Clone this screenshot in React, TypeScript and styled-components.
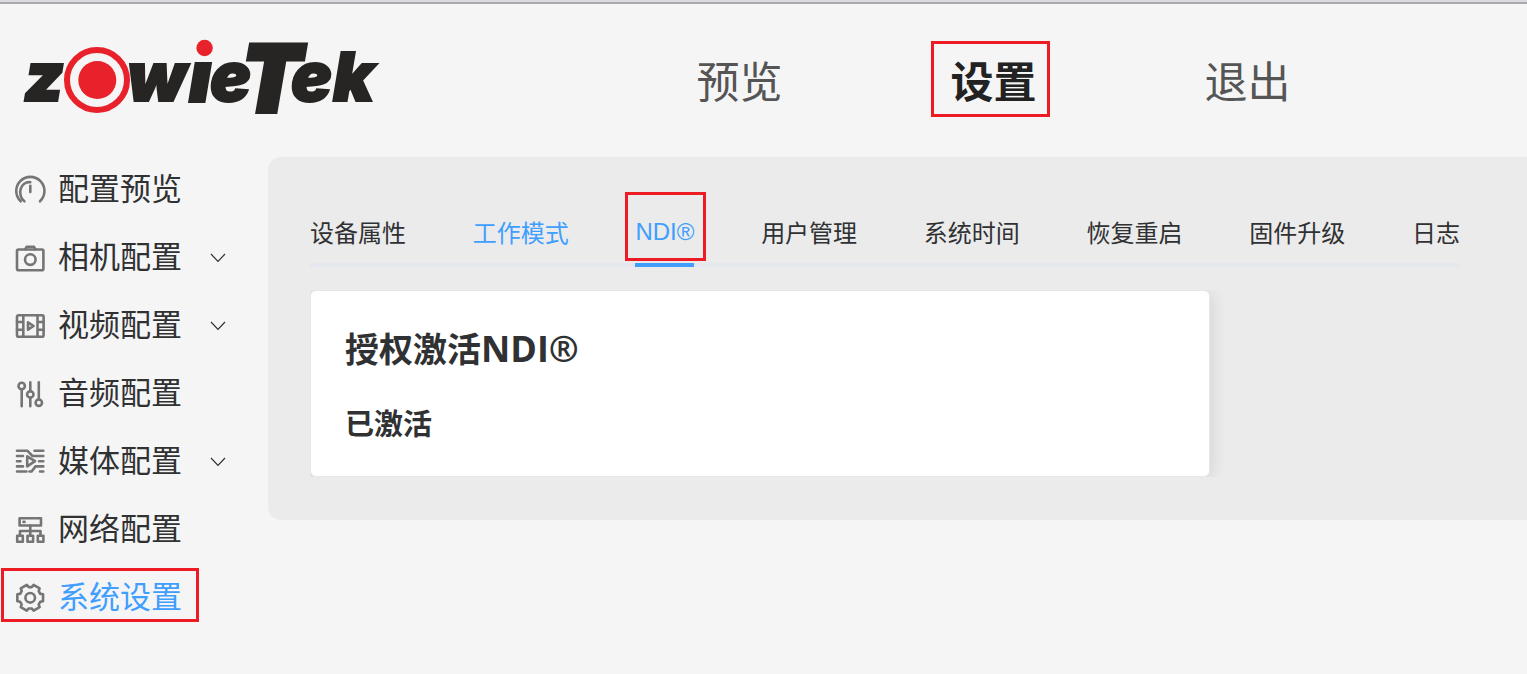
import React from "react";
import styled, { createGlobalStyle, css } from "styled-components";

const sans = `"Liberation Sans", "Noto Sans CJK SC", sans-serif`;
const red = "#ed1c24";
const blue = "#409eff";

const GlobalStyle = createGlobalStyle`
  *, *::before, *::after { box-sizing: border-box; }
  body { margin: 0; background: #f5f5f5; color: #303133; font-family: ${sans}; }
  button { margin: 0; background: none; font-family: inherit; color: inherit; cursor: pointer; }
  h1, h2, p, ul { margin: 0; padding: 0; }
`;

const Page = styled.div`
  min-height: 100vh;
  border-top: 2px solid #dadae2;
`;

const Header = styled.header`
  display: flex;
  align-items: flex-start;
  height: 155px;
  padding: 0 156px 0 16px;
  border-top: 2px solid #a9a9ad;
`;

const Logo = styled.svg`
  flex: none;
  width: 376px;
  height: 120px;
  overflow: visible;
  font-family: Inter, Roboto, sans-serif;
  font-size: 68px;
  font-weight: 900;
  font-style: italic;
`;

const MainNav = styled.nav`
  flex: 1;
  display: grid;
  grid-template-columns: repeat(3, 1fr);
  justify-items: center;
  margin: 37px 0 0 217px;
`;

const MainButton = styled.button<{ $active?: boolean }>`
  height: 76px;
  padding: 8px 10px 0 17px;
  border: 3px solid ${(p) => (p.$active ? red : "transparent")};
  color: ${(p) => (p.$active ? "#222" : "#555")};
  font-size: 43px;
  font-weight: ${(p) => (p.$active ? 700 : 400)};
  line-height: 62px;
  white-space: nowrap;
`;

const Body = styled.div`
  display: flex;
  align-items: flex-start;
`;

const Sidebar = styled.nav`
  flex: none;
  width: 268px;
  padding: 3px 0 0 1px;
`;

const MenuList = styled.ul`
  display: flex;
  flex-direction: column;
  align-items: flex-start;
  gap: 14px;
  list-style: none;
`;

const MenuButton = styled.button<{ $active?: boolean }>`
  display: flex;
  align-items: center;
  height: 54px;
  padding: 6px 14px 0 10px;
  border: 3px solid ${(p) => (p.$active ? red : "transparent")};
  color: ${(p) => (p.$active ? blue : "#303133")};
  font-size: 31px;
  line-height: 42px;
  white-space: nowrap;
`;

const MenuLabel = styled.span`
  margin-left: 12px;
`;

const Icon = styled.svg`
  flex: none;
  width: 32px;
  height: 32px;
  fill: none;
  stroke: #757575;
  stroke-width: 2.6;
  stroke-linecap: round;
  stroke-linejoin: round;
`;

const Chevron = styled.svg`
  flex: none;
  width: 16px;
  height: 10px;
  margin-left: 28px;
  fill: none;
  stroke: #303133;
  stroke-width: 1.2;
`;

const Panel = styled.main`
  flex: 1;
  min-width: 0;
  padding: 48px 67px 43px 42px;
  border-radius: 13px 0 0 13px;
  background: #ebebeb;
`;

const Tabs = styled.div`
  display: flex;
  justify-content: space-between;
  border-bottom: 4px solid #e4e7ed;
`;

const Tab = styled.button<{ $blue?: boolean; $active?: boolean }>`
  position: relative;
  height: 62px;
  margin-bottom: -4px;
  padding: 0 0 4px;
  border: 0;
  color: ${(p) => (p.$blue || p.$active ? blue : "#303133")};
  font-size: 24px;
  line-height: 58px;
  white-space: nowrap;
  ${(p) =>
    p.$active &&
    css`
      border-bottom: 4px solid ${blue};
      padding-bottom: 4px;
      line-height: 54px;
      &::after {
        content: "";
        position: absolute;
        inset: -13px -12px 2px -10px;
        border: 3px solid ${red};
      }
    `}
`;

const CardArea = styled.div`
  margin-top: 23px;
  overflow: hidden;
`;

const Card = styled.section`
  max-width: 900px;
  padding: 34px;
  padding-bottom: 31px;
  border: 1px solid #e4e7ed;
  border-radius: 6px;
  background: #fff;
  box-shadow: 0 2px 18px rgba(0, 0, 0, 0.12);
`;

const CardTitle = styled.h1`
  font-family: "Open Sans", "Noto Sans CJK SC", sans-serif;
  font-size: 34px;
  line-height: 48px;
`;

const Latin = styled.span`
  font-size: 36px;
  line-height: 1;
`;

const CardStatus = styled.h2`
  margin-top: 32px;
  font-size: 29px;
  line-height: 40px;
`;

// Outline of a gear with six teeth, each tooth 60 degrees from the next.
const gearPoint = (radius: number, degrees: number) => {
  const a = (degrees * Math.PI) / 180;
  return `${(16.2 + radius * Math.cos(a)).toFixed(2)} ${(15.8 + radius * Math.sin(a)).toFixed(2)}`;
};
const gearOutline =
  "M" +
  [0, 60, 120, 180, 240, 300]
    .flatMap((a) => [
      gearPoint(13.3, a - 15),
      gearPoint(13.3, a + 15),
      gearPoint(10.8, a + 22),
      gearPoint(10.8, a + 38),
    ])
    .join("L") +
  "Z";

const icons = {
  gauge: (
    <>
      <path d="M6.7 27.3A14.1 14.1 0 1 1 26 27.3" />
      <path d="M16.3 8.3A8.7 10.3 0 0 0 10.4 27.3" />
      <path d="M16.3 11.8V18" />
    </>
  ),
  camera: (
    <>
      <rect x="3" y="7.5" width="26.4" height="20.8" rx="1.5" />
      <path d="M11.3 7.2L12.6 4.8H20L21.3 7.2" />
      <circle cx="16.3" cy="17.6" r="5.3" />
    </>
  ),
  film: (
    <>
      <rect x="3" y="5.3" width="26.6" height="21.4" rx="1.5" />
      <path d="M9.3 5.3V26.7M23.5 5.3V26.7M3 12H9.3M3 19.8H9.3M23.5 12H29.6M23.5 19.8H29.6" />
      <path d="M14 12.3L19.6 16L14 19.7Z" />
    </>
  ),
  sliders: (
    <>
      <circle cx="7.7" cy="8" r="3.2" />
      <circle cx="16.3" cy="16.4" r="3.2" />
      <circle cx="24.8" cy="24.7" r="3.2" />
      <path d="M7.7 11.2V28.3M16.3 4.4V13.2M16.3 19.6V28.3M24.8 4.4V21.5" />
    </>
  ),
  media: (
    <>
      <path d="M3 4.8H13.5L18.5 10H29.3M20.5 4.8H29.3M3 10H9M3 15.2H6.5M25 15.2H29.3M3 20.4H9" />
      <path d="M29.3 20.4H21.5L17.6 25.5H15.5M3 25.5H12.5M26 25.5H29.3" />
      <path d="M13.2 10.4L21 15.2L13.2 20.4Z" />
    </>
  ),
  network: (
    <>
      <rect x="5.6" y="4.3" width="21.4" height="7.2" />
      <path d="M9.5 7.9H10.5M16.3 11.5V21.5M6 21.5V17H26.5V21.5" />
      <path d="M3.2 21.8H8.8V27.7H3.2ZM13.5 21.8H19.1V27.7H13.5ZM23.8 21.8H29.4V27.7H23.8Z" />
    </>
  ),
  gear: (
    <>
      <path d={gearOutline} />
      <circle cx="16.2" cy="15.8" r="4.8" />
    </>
  ),
};

const menu: { label: string; icon: keyof typeof icons; expandable?: boolean; active?: boolean }[] = [
  { label: "配置预览", icon: "gauge" },
  { label: "相机配置", icon: "camera", expandable: true },
  { label: "视频配置", icon: "film", expandable: true },
  { label: "音频配置", icon: "sliders" },
  { label: "媒体配置", icon: "media", expandable: true },
  { label: "网络配置", icon: "network" },
  { label: "系统设置", icon: "gear", active: true },
];

const tabs: { label: string; blue?: boolean; active?: boolean }[] = [
  { label: "设备属性" },
  { label: "工作模式", blue: true },
  { label: "NDI®", active: true },
  { label: "用户管理" },
  { label: "系统时间" },
  { label: "恢复重启" },
  { label: "固件升级" },
  { label: "日志" },
];

function Brand() {
  return (
    <Logo viewBox="16 4 376 120" role="img" aria-label="zowieTek">
      <g fill="#262523" stroke="#262523" strokeWidth="2">
        <text x="24" y="101">z</text>
        <text x="127" y="101">w</text>
        <text x="190" y="101" strokeWidth="4">ı</text>
        <text x="210" y="101">e</text>
        <text x="244" y="111" fontFamily="Roboto" fontSize="90" strokeWidth="7">T</text>
        <text x="291" y="101">e</text>
        <text x="333" y="101">k</text>
      </g>
      <circle cx="97" cy="80" r="30" fill="#f5f5f5" stroke="#e8212a" strokeWidth="6" />
      <circle cx="97.3" cy="80" r="19" fill="#e8212a" />
      <circle cx="204.6" cy="48" r="8.2" fill="#e8212a" />
    </Logo>
  );
}

export default function App() {
  return (
    <Page>
      <GlobalStyle />
      <Header>
        <Brand />
        <MainNav>
          <MainButton>预览</MainButton>
          <MainButton $active>设置</MainButton>
          <MainButton>退出</MainButton>
        </MainNav>
      </Header>
      <Body>
        <Sidebar>
          <MenuList>
            {menu.map((item) => (
              <li key={item.label}>
                <MenuButton $active={item.active}>
                  <Icon viewBox="0 0 32 32" aria-hidden="true">{icons[item.icon]}</Icon>
                  <MenuLabel>{item.label}</MenuLabel>
                  {item.expandable && (
                    <Chevron viewBox="0 0 16 10" aria-hidden="true">
                      <path d="M1 1L8 8.4L15 1" />
                    </Chevron>
                  )}
                </MenuButton>
              </li>
            ))}
          </MenuList>
        </Sidebar>
        <Panel>
          <Tabs role="tablist">
            {tabs.map((tab) => (
              <Tab key={tab.label} role="tab" aria-selected={!!tab.active} $blue={tab.blue} $active={tab.active}>
                {tab.label}
              </Tab>
            ))}
          </Tabs>
          <CardArea>
            <Card>
              <CardTitle>
                授权激活<Latin>NDI®</Latin>
              </CardTitle>
              <CardStatus>已激活</CardStatus>
            </Card>
          </CardArea>
        </Panel>
      </Body>
    </Page>
  );
}
